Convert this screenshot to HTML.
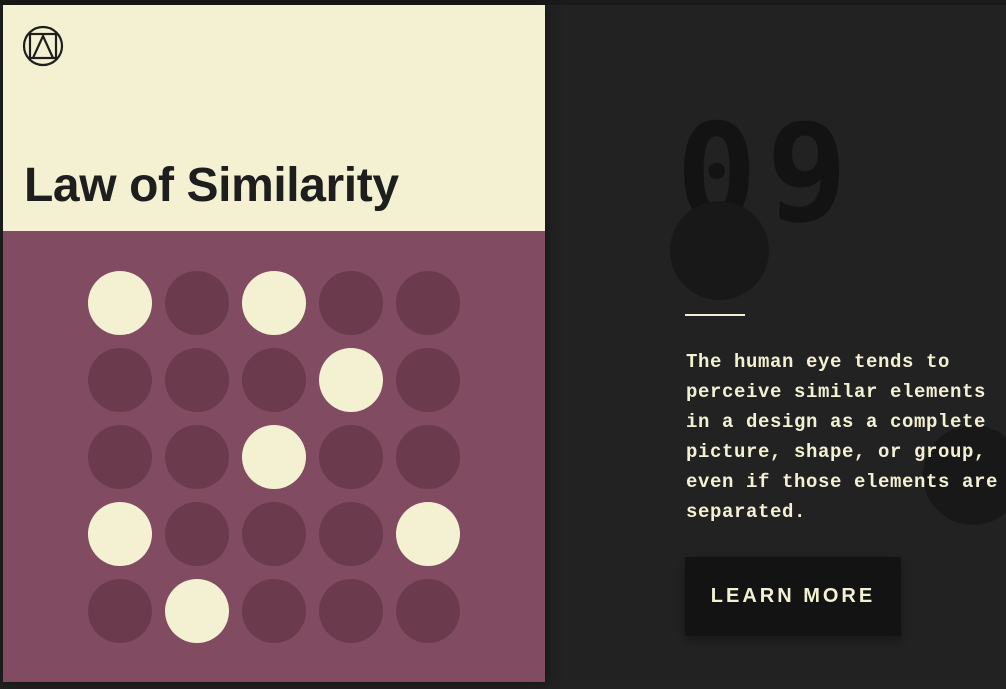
<!DOCTYPE html>
<html><head><meta charset="utf-8"><style>
html,body{margin:0;padding:0}
body{width:1006px;height:689px;background:#222;position:relative;overflow:hidden;font-family:"Liberation Sans",sans-serif}
.topbar{position:absolute;left:0;top:0;width:1006px;height:5px;background:#1a1a1a}
.card{position:absolute;left:3px;top:5px;width:542px;height:677px;background:#814b62;box-shadow:0 0 12px rgba(0,0,0,.5)}
.cream{position:absolute;left:0;top:0;width:542px;height:226px;background:#f4f1d2}
h1{position:absolute;left:21px;top:157px;margin:0;font-size:48px;font-weight:bold;color:#1e1e1e;line-height:1;letter-spacing:-0.4px}
.c{position:absolute;width:64px;height:64px;border-radius:50%;background:#6b3a4d}
.c.w{background:#f4f1d2}
.num{position:absolute;left:676px;top:106px;font-family:"DejaVu Sans Mono","Liberation Mono",monospace;font-size:135px;color:#131313;line-height:1;letter-spacing:9px;font-weight:bold}
.blob{position:absolute;border-radius:50%;background:#181818}
.line{position:absolute;left:685px;top:314px;width:60px;height:2px;background:#f4f1d2}
.txt{position:absolute;left:686px;top:347px;font-family:"Liberation Mono",monospace;font-size:19px;line-height:30px;color:#f4f1d2;letter-spacing:0.6px;white-space:pre;font-weight:bold}
.btn{position:absolute;left:685px;top:557px;width:216px;height:79px;background:#131313;box-shadow:0 4px 8px rgba(0,0,0,.3);color:#f4f1d2;font-weight:700;font-size:20px;letter-spacing:3px;text-align:center;line-height:79px}
</style></head><body>
<div class="topbar"></div>
<div class="card">
<div class="cream">
<svg style="position:absolute;left:19px;top:20px" width="42" height="42" viewBox="0 0 42 42" fill="none" stroke="#1e1e1e" stroke-width="2.2"><circle cx="21" cy="21" r="19"/><rect x="8" y="9" width="26" height="24"/><path d="M11 33 L21 11 L31 33"/></svg>
<h1>Law of Similarity</h1>
</div>
<div class="c w" style="left:85px;top:266px"></div><div class="c" style="left:162px;top:266px"></div><div class="c w" style="left:239px;top:266px"></div><div class="c" style="left:316px;top:266px"></div><div class="c" style="left:393px;top:266px"></div>
<div class="c" style="left:85px;top:343px"></div><div class="c" style="left:162px;top:343px"></div><div class="c" style="left:239px;top:343px"></div><div class="c w" style="left:316px;top:343px"></div><div class="c" style="left:393px;top:343px"></div>
<div class="c" style="left:85px;top:420px"></div><div class="c" style="left:162px;top:420px"></div><div class="c w" style="left:239px;top:420px"></div><div class="c" style="left:316px;top:420px"></div><div class="c" style="left:393px;top:420px"></div>
<div class="c w" style="left:85px;top:497px"></div><div class="c" style="left:162px;top:497px"></div><div class="c" style="left:239px;top:497px"></div><div class="c" style="left:316px;top:497px"></div><div class="c w" style="left:393px;top:497px"></div>
<div class="c" style="left:85px;top:574px"></div><div class="c w" style="left:162px;top:574px"></div><div class="c" style="left:239px;top:574px"></div><div class="c" style="left:316px;top:574px"></div><div class="c" style="left:393px;top:574px"></div>
</div>
<div class="num">09</div>
<div class="blob" style="left:670px;top:201px;width:99px;height:99px"></div>
<div class="blob" style="left:923px;top:425px;width:100px;height:100px"></div>
<div class="line"></div>
<div class="txt">The human eye tends to
perceive similar elements
in a design as a complete
picture, shape, or group,
even if those elements are
separated.</div>
<div class="btn">LEARN MORE</div>
</body></html>
